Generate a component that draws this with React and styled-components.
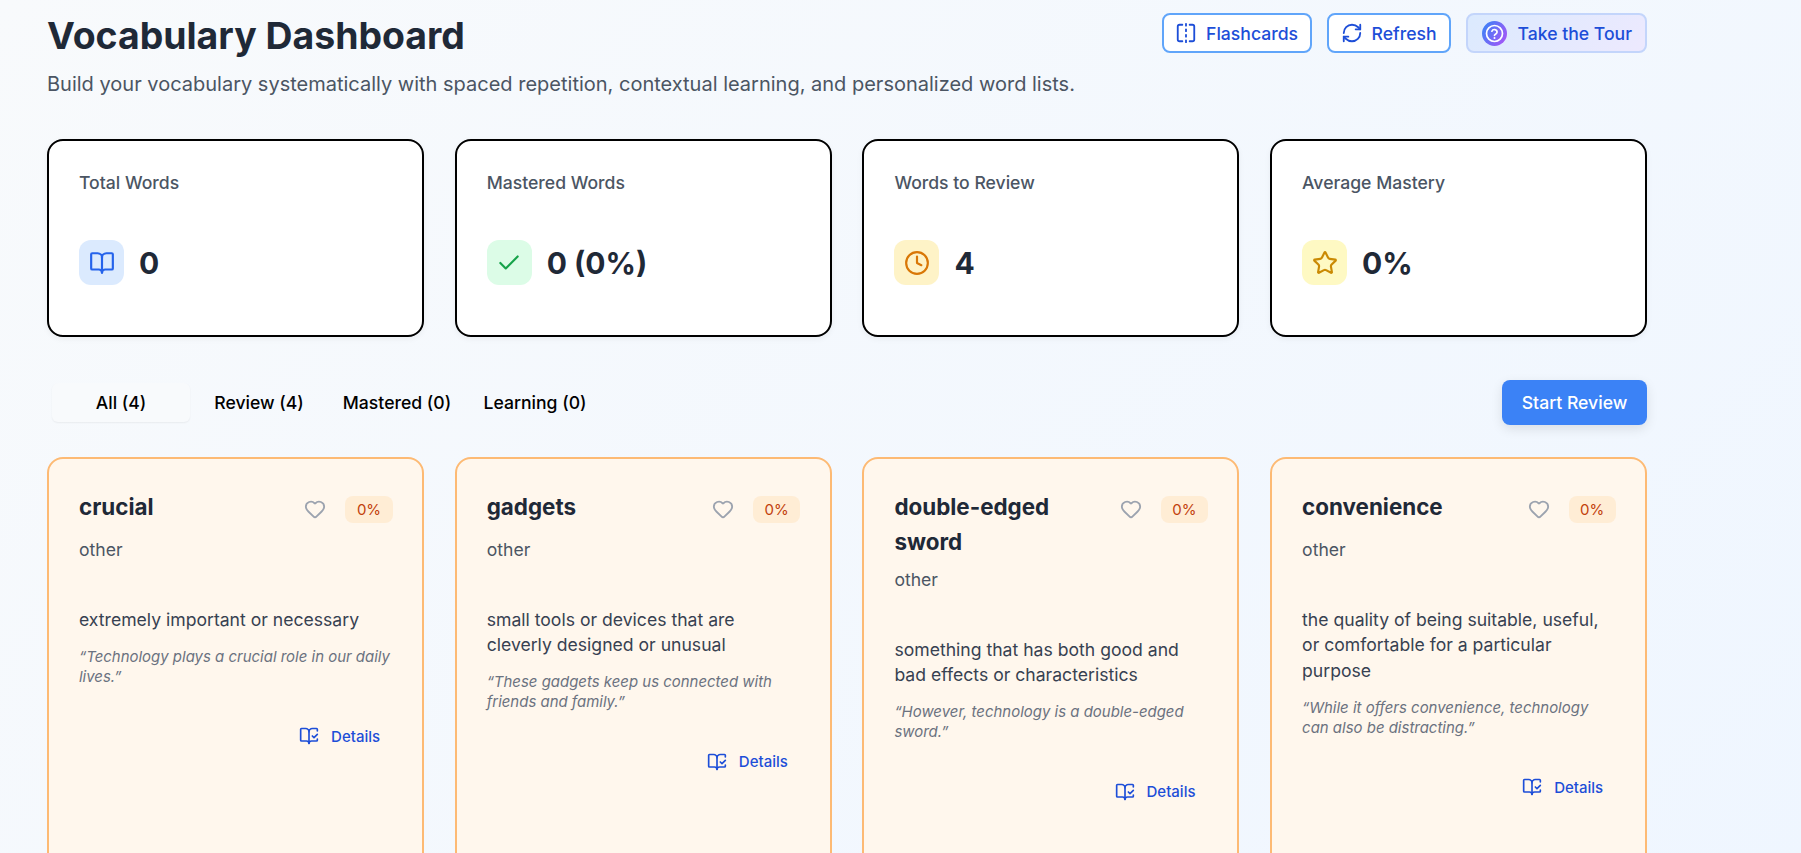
import React from "react";
import styled, { createGlobalStyle } from "styled-components";
import { BookOpen, BookOpenCheck, Check, Clock, FlipHorizontal, Heart, RefreshCw, Star } from "lucide-react";

const GlobalStyle = createGlobalStyle`
html, body {
  margin: 0;
  height: 853px;
  overflow: hidden;
}
body {
  font-family: "Inter", "Liberation Sans", sans-serif;
  font-size: 17.6px;
  line-height: 1.6;
  color: #1f2937;
}
* { box-sizing: border-box; }
`;

const Page = styled.div`
  min-height: 853px;
  padding: 13px 154px 0 47px;
  background: linear-gradient(135deg, #f8fafc 0%, #eff6ff 100%);
`;

const Header = styled.header`
  display: flex;
  justify-content: space-between;
  align-items: flex-start;
`;

const Title = styled.h1`
  margin: 0;
  font-size: 37.4px;
  line-height: 46px;
  font-weight: 700;
  color: #1f2937;
`;

const Subtitle = styled.p`
  margin: 9px 0 0;
  font-size: 20px;
  line-height: 32px;
  color: #4b5563;
`;

const Actions = styled.div`
  display: flex;
  gap: 15px;
`;

const ActionButton = styled.button`
  display: flex;
  align-items: center;
  gap: ${(p) => (p.$tour ? 11 : 9)}px;
  height: 40px;
  padding: 0 ${(p) => (p.$tour ? 13 : 12)}px 0 ${(p) => (p.$tour ? 14 : 11.5)}px;
  border: 2px solid ${(p) => (p.$tour ? "#c3d5fb" : "#60a5fa")};
  border-radius: 8px;
  background: ${(p) => (p.$tour ? "linear-gradient(135deg, #dbeafe, #ede9fe)" : "#fff")};
  color: #1d4ed8;
  font: 500 17.6px "Inter", sans-serif;
`;

const StatsGrid = styled.section`
  display: grid;
  grid-template-columns: repeat(4, 1fr);
  gap: 30.8px;
  margin-top: 38.5px;
`;

const StatCard = styled.div`
  height: 198.5px;
  padding: 28.5px 30px;
  border: 2px solid #000;
  border-radius: 16px;
  background: #fff;
  box-shadow: 0 2px 6px rgba(0, 0, 0, 0.05);
`;

const StatLabel = styled.div`
  font-size: 17.6px;
  font-weight: 500;
  line-height: 28px;
  color: #4b5563;
`;

const StatRow = styled.div`
  display: flex;
  align-items: center;
  gap: 15px;
  margin-top: 41.5px;
`;

const StatIcon = styled.div`
  display: flex;
  align-items: center;
  justify-content: center;
  width: 45px;
  height: 45px;
  border-radius: 12px;
  background: ${(p) => p.$bg};
  color: ${(p) => p.$color};
`;

const StatValue = styled.div`
  font-size: 30px;
  font-weight: 700;
  color: #1f2937;
`;

const Toolbar = styled.div`
  display: flex;
  justify-content: space-between;
  align-items: center;
  margin-top: 43px;
`;

const Tabs = styled.div`
  display: flex;
  align-items: center;
  padding-left: 5px;
`;

const Tab = styled.button`
  height: 39px;
  width: 138px;
  padding: 0;
  border: 0;
  border-radius: 6px;
  background: ${(p) => (p.$active ? "#f8fafc" : "transparent")};
  box-shadow: ${(p) => (p.$active ? "0 1px 2px rgba(0, 0, 0, 0.06)" : "none")};
  color: #000;
  font: 500 17.6px "Inter", sans-serif;
`;

const StartButton = styled.button`
  height: 45px;
  width: 145px;
  border: 0;
  border-radius: 8px;
  background: #3b82f6;
  color: #fff;
  font: 500 17.6px "Inter", sans-serif;
  box-shadow: 0 4px 12px rgba(0, 0, 0, 0.1);
`;

const WordGrid = styled.section`
  display: grid;
  grid-template-columns: repeat(4, 1fr);
  gap: 30.8px;
  margin-top: 32px;
`;

const WordCard = styled.article`
  min-height: 420px;
  padding: 30px 30.8px 30px 30px;
  border: 2px solid #fdba74;
  border-radius: 16px;
  background: #fff7ed;
`;

const CardHead = styled.div`
  display: flex;
  justify-content: space-between;
  align-items: flex-start;
  gap: 16px;
`;

const Word = styled.h3`
  margin: 0;
  font-size: 22.4px;
  font-weight: 700;
  line-height: 35px;
  color: #1f2937;
`;

const CardMeta = styled.div`
  display: flex;
  align-items: center;
  flex-shrink: 0;
  height: 40px;
  margin-right: -1.5px;
  gap: 19px;
`;

const HeartIcon = styled(Heart)`
  color: #9ca3af;
`;

const Badge = styled.span`
  padding: 2px 11.5px 1px;
  border-radius: 8px;
  background: #ffedd5;
  color: #c2410c;
  font-size: 15px;
  font-weight: 400;
  line-height: 24px;
`;

const PartOfSpeech = styled.div`
  margin-top: 8px;
  font-size: 17.6px;
  line-height: 25.6px;
  color: #4b5563;
`;

const Definition = styled.p`
  margin: 44px 0 0;
  font-size: 17.6px;
  line-height: 25.6px;
  color: #374151;
`;

const Example = styled.p`
  margin: 14.5px 0 0;
  font-size: 14.96px;
  font-style: italic;
  line-height: 20px;
  color: #6b7280;
`;

const CardFoot = styled.div`
  display: flex;
  justify-content: flex-end;
  margin-top: 31.5px;
`;

const DetailsButton = styled.button`
  display: flex;
  align-items: center;
  gap: 12px;
  height: 36px;
  padding: 0 11px;
  border: 0;
  background: none;
  color: #1d4ed8;
  font: 500 15px "Inter", sans-serif;
`;

const TourIcon = () => (
  <svg width="25" height="25" viewBox="0 0 25 25" fill="none">
    <defs>
      <linearGradient id="tourGrad" x1="0" y1="0.2" x2="1" y2="0.8">
        <stop offset="0" stopColor="#3b82f6" />
        <stop offset="1" stopColor="#a855f7" />
      </linearGradient>
    </defs>
    <circle cx="12.5" cy="12.5" r="12.5" fill="url(#tourGrad)" />
    <circle cx="12.5" cy="12.5" r="8" stroke="#fff" strokeWidth="1.7" />
    <path d="M9.9 10.2a2.7 2.7 0 0 1 5.2.9c0 1.8-2.6 2.2-2.6 3.2" stroke="#fff" strokeWidth="1.7" strokeLinecap="round" />
    <circle cx="12.5" cy="16.9" r="1" fill="#fff" />
  </svg>
);

const stats = [
  { label: "Total Words", value: "0", icon: BookOpen, bg: "#dbeafe", color: "#2563eb" },
  { label: "Mastered Words", value: "0 (0%)", icon: Check, bg: "#dcfce7", color: "#16a34a" },
  { label: "Words to Review", value: "4", icon: Clock, bg: "#fef3c7", color: "#d97706" },
  { label: "Average Mastery", value: "0%", icon: Star, bg: "#fef9c3", color: "#ca8a04" },
];

const words = [
  {
    word: "crucial",
    definition: "extremely important or necessary",
    example: "“Technology plays a crucial role in our daily lives.”",
  },
  {
    word: "gadgets",
    definition: "small tools or devices that are cleverly designed or unusual",
    example: "“These gadgets keep us connected with friends and family.”",
  },
  {
    word: "double-edged sword",
    definition: "something that has both good and bad effects or characteristics",
    example: "“However, technology is a double-edged sword.”",
  },
  {
    word: "convenience",
    definition: "the quality of being suitable, useful, or comfortable for a particular purpose",
    example: "“While it offers convenience, technology can also be distracting.”",
  },
];

const tabs = [
  { label: "All (4)", active: true },
  { label: "Review (4)" },
  { label: "Mastered (0)" },
  { label: "Learning (0)" },
];

export default function App() {
  return (
    <Page>
      <GlobalStyle />
      <Header>
        <div>
          <Title>Vocabulary Dashboard</Title>
          <Subtitle>
            Build your vocabulary systematically with spaced repetition, contextual learning, and personalized word lists.
          </Subtitle>
        </div>
        <Actions>
          <ActionButton>
            <FlipHorizontal size={22} />
            Flashcards
          </ActionButton>
          <ActionButton>
            <RefreshCw size={22} />
            Refresh
          </ActionButton>
          <ActionButton $tour>
            <TourIcon />
            Take the Tour
          </ActionButton>
        </Actions>
      </Header>

      <StatsGrid>
        {stats.map((s) => (
          <StatCard key={s.label}>
            <StatLabel>{s.label}</StatLabel>
            <StatRow>
              <StatIcon $bg={s.bg} $color={s.color}>
                <s.icon size={26} strokeWidth={2} />
              </StatIcon>
              <StatValue>{s.value}</StatValue>
            </StatRow>
          </StatCard>
        ))}
      </StatsGrid>

      <Toolbar>
        <Tabs>
          {tabs.map((t) => (
            <Tab key={t.label} $active={t.active}>
              {t.label}
            </Tab>
          ))}
        </Tabs>
        <StartButton>Start Review</StartButton>
      </Toolbar>

      <WordGrid>
        {words.map((w) => (
          <WordCard key={w.word}>
            <CardHead>
              <Word>{w.word}</Word>
              <CardMeta>
                <HeartIcon size={22} />
                <Badge>0%</Badge>
              </CardMeta>
            </CardHead>
            <PartOfSpeech>other</PartOfSpeech>
            <Definition>{w.definition}</Definition>
            <Example>{w.example}</Example>
            <CardFoot>
              <DetailsButton>
                <BookOpenCheck size={20} />
                Details
              </DetailsButton>
            </CardFoot>
          </WordCard>
        ))}
      </WordGrid>
    </Page>
  );
}
